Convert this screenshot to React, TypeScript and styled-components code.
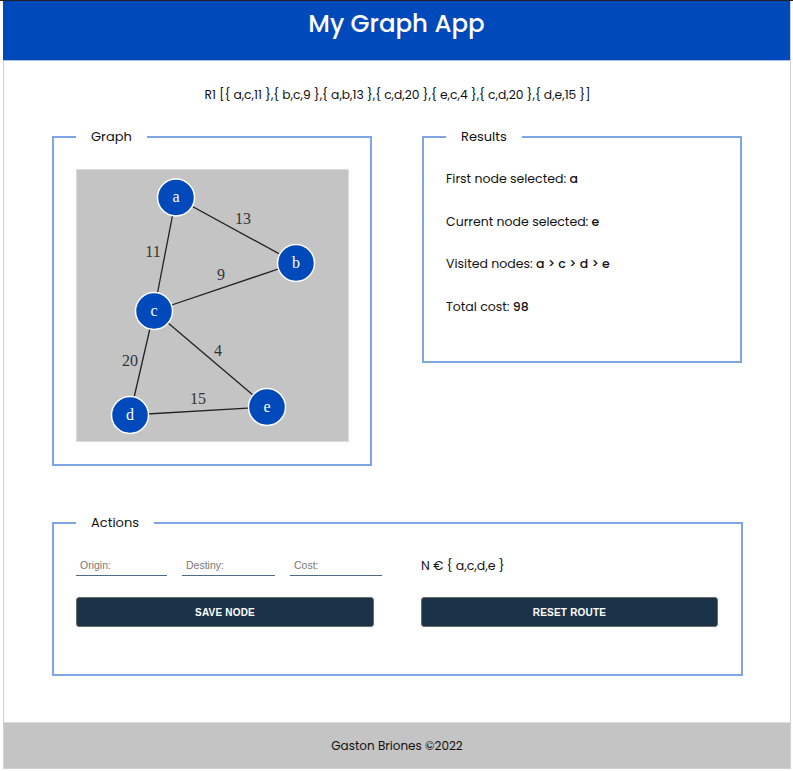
import React from "react";
import styled, { createGlobalStyle } from "styled-components";

const GlobalStyle = createGlobalStyle`
  html, body { margin: 0; padding: 0; background: #ffffff; }
  body { font-family: "Poppins", "Open Sans", "Liberation Sans", sans-serif; color: #111; }
  * { box-sizing: border-box; }
`;

const Page = styled.div`
  border-top: 1px solid #222;
  padding: 0 2px 0 3px;
`;

const Frame = styled.div`
  border: 1px solid #d2d2d2;
  border-top: none;
  display: flex;
  flex-direction: column;
`;

const Header = styled.header`
  height: 60px;
  background: #0049bb;
  border-bottom: 1px solid #a9c0e8;
  display: flex;
  align-items: flex-start;
  justify-content: center;
  padding-top: 8px;
  margin-left: -1px;
`;

const Title = styled.h1`
  margin: 0;
  color: #fff;
  font-size: 24.5px;
  font-weight: 500;
  line-height: 30px;
`;

const Main = styled.main`
  padding: 24px 47px 46px 48px;
  display: flex;
  flex-direction: column;
`;

const Routes = styled.p`
  margin: 0 0 22px;
  text-align: center;
  font-size: 12.3px;
  line-height: 20px;
`;

const Row = styled.div`
  display: grid;
  grid-template-columns: 320px 320px;
  column-gap: 50px;
  align-items: start;
  margin-bottom: 47px;
`;

const Box = styled.fieldset<{ $height?: number; $pb?: number }>`
  margin: 0;
  border: 2px solid #80a5e4;
  padding: 22px 22px ${(p) => p.$pb ?? 22}px;
  min-width: 0;
  ${(p) => (p.$height ? `height: ${p.$height}px;` : "")}
`;

const Legend = styled.legend`
  padding: 0 15px;
  font-size: 13px;
  line-height: 20px;
  color: #111;
`;

const GraphCanvas = styled.div`
  width: 273px;
  height: 273px;
  background: #c4c4c4;
  border: 1px solid #dcdcdc;
  display: flex;
`;

const ResultList = styled.div`
  display: flex;
  flex-direction: column;
  gap: 22.5px;
`;

const ResultLine = styled.p`
  margin: 0;
  font-size: 12.5px;
  line-height: 20px;
  b { font-weight: 500; }
`;

const ActionsGrid = styled.div`
  display: grid;
  grid-template-columns: 345px 297px;
  row-gap: 21px;
  align-items: center;
`;

const Inputs = styled.div`
  display: flex;
  gap: 15px;
`;

const Field = styled.input<{ $w: number }>`
  width: ${(p) => p.$w}px;
  height: 21px;
  border: none;
  border-bottom: 1.5px solid #4d6a86;
  background: transparent;
  font-family: "Liberation Sans", Arial, sans-serif;
  font-size: 10.5px;
  padding: 0 4px;
  outline: none;
  &::placeholder { color: #777; }
`;

const SetText = styled.div`
  font-size: 12.5px;
  line-height: 20px;
`;

const Button = styled.button<{ $w: number }>`
  width: ${(p) => p.$w}px;
  height: 30px;
  background: #1b3349;
  color: #fff;
  border: 1px solid #6b6b6b;
  border-radius: 3px;
  font-family: "Liberation Sans", Arial, sans-serif;
  font-weight: 700;
  font-size: 10px;
  letter-spacing: 0.2px;
  cursor: pointer;
`;

const Footer = styled.footer`
  height: 46px;
  background: #c4c4c4;
  border-top: 1px solid #dedede;
  display: flex;
  align-items: center;
  justify-content: center;
  font-size: 12px;
  color: #111;
`;

const Tail = styled.div`
  height: 2px;
`;

type Node = { id: string; x: number; y: number };
const nodes: Node[] = [
  { id: "a", x: 99, y: 27.5 },
  { id: "b", x: 219, y: 93 },
  { id: "c", x: 77, y: 141 },
  { id: "d", x: 53, y: 245 },
  { id: "e", x: 190, y: 237 },
];
const edges: [string, string][] = [
  ["a", "b"],
  ["a", "c"],
  ["c", "b"],
  ["c", "e"],
  ["c", "d"],
  ["d", "e"],
];
const labels = [
  { t: "13", x: 166, y: 48 },
  { t: "11", x: 76, y: 81 },
  { t: "9", x: 144, y: 104 },
  { t: "4", x: 141, y: 180 },
  { t: "20", x: 53, y: 190 },
  { t: "15", x: 121, y: 228 },
];

function Graph() {
  const get = (id: string) => nodes.find((n) => n.id === id)!;
  return (
    <GraphCanvas>
      <svg width="271" height="271" viewBox="0 0 271 271">
        {edges.map(([f, t]) => {
          const a = get(f);
          const b = get(t);
          return <line key={f + t} x1={a.x} y1={a.y} x2={b.x} y2={b.y} stroke="#222" strokeWidth={1.3} />;
        })}
        {labels.map((l) => (
          <text
            key={l.t}
            x={l.x}
            y={l.y + 5.5}
            textAnchor="middle"
            fontFamily="'Liberation Serif', 'DejaVu Serif', serif"
            fontSize="16"
            fill="#333"
          >
            {l.t}
          </text>
        ))}
        {nodes.map((n) => (
          <g key={n.id}>
            <circle cx={n.x} cy={n.y} r={18.5} fill="#0049bb" stroke="#fff" strokeWidth={1.5} />
            <text
              x={n.x}
              y={n.y + 4.5}
              textAnchor="middle"
              fontFamily="'Liberation Serif', 'DejaVu Serif', serif"
              fontSize="16"
              fill="#fff"
            >
              {n.id}
            </text>
          </g>
        ))}
      </svg>
    </GraphCanvas>
  );
}

export default function App() {
  return (
    <Page>
      <GlobalStyle />
      <Frame>
        <Header>
          <Title>My Graph App</Title>
        </Header>
        <Main>
          <Routes>R1 [{"{"} a,c,11 {"}"},{"{"} b,c,9 {"}"},{"{"} a,b,13 {"}"},{"{"} c,d,20 {"}"},{"{"} e,c,4 {"}"},{"{"} c,d,20 {"}"},{"{"} d,e,15 {"}"}]</Routes>
          <Row>
            <Box>
              <Legend>Graph</Legend>
              <Graph />
            </Box>
            <Box $height={236}>
              <Legend>Results</Legend>
              <ResultList>
                <ResultLine>First node selected: <b>a</b></ResultLine>
                <ResultLine>Current node selected: <b>e</b></ResultLine>
                <ResultLine>Visited nodes: <b>a &gt; c &gt; d &gt; e</b></ResultLine>
                <ResultLine>Total cost: <b>98</b></ResultLine>
              </ResultList>
            </Box>
          </Row>
          <Box $pb={47}>
            <Legend>Actions</Legend>
            <ActionsGrid>
              <Inputs>
                <Field $w={91} placeholder="Origin:" />
                <Field $w={93} placeholder="Destiny:" />
                <Field $w={92} placeholder="Cost:" />
              </Inputs>
              <SetText>N € {"{"} a,c,d,e {"}"}</SetText>
              <Button $w={298}>SAVE NODE</Button>
              <Button $w={297}>RESET ROUTE</Button>
            </ActionsGrid>
          </Box>
        </Main>
        <Footer>Gaston Briones ©2022</Footer>
      </Frame>
      <Tail />
    </Page>
  );
}
